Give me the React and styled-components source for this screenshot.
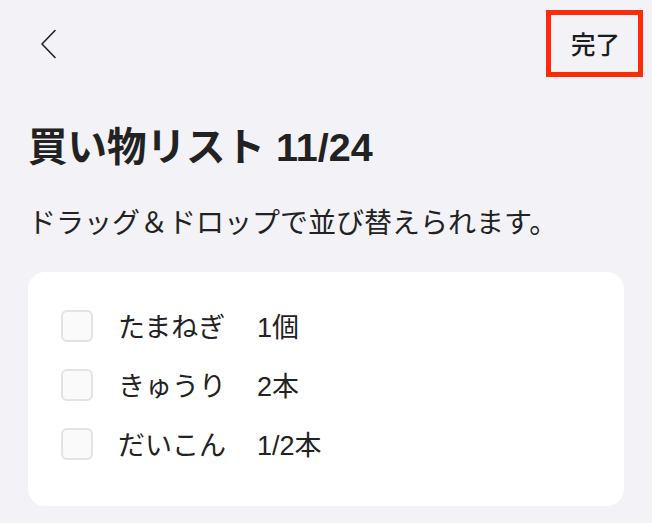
import React from 'react';
import styled, { createGlobalStyle } from 'styled-components';

const GlobalStyle = createGlobalStyle`
  html, body {
    margin: 0;
    padding: 0;
    background: #f2f2f7;
  }
  body {
    font-family: 'Liberation Sans', 'Noto Sans CJK JP', sans-serif;
    color: #222222;
  }
`;

const Page = styled.div`
  width: 652px;
  height: 523px;
  background: #f2f2f7;
  overflow: hidden;
`;

const Nav = styled.div`
  height: 87px;
  display: flex;
  align-items: center;
  justify-content: space-between;
  padding: 0 9px 0 40px;
  box-sizing: border-box;
`;

const BackButton = styled.button`
  border: none;
  background: none;
  padding: 0;
  width: 16px;
  height: 30px;
  display: flex;
  cursor: pointer;
`;

const DoneButton = styled.button`
  width: 97px;
  height: 67px;
  box-sizing: border-box;
  border: 5px solid #ff2a08;
  background: transparent;
  font-family: 'Noto Sans CJK JP', sans-serif;
  font-size: 24.5px;
  font-weight: 500;
  color: #1c1c1c;
  display: flex;
  align-items: center;
  justify-content: center;
  padding: 0 0 0 2px;
  cursor: pointer;
`;

const Content = styled.div`
  padding: 0 28px;
`;

const Title = styled.h1`
  margin: 36px 0 0;
  font-size: 39.5px;
  line-height: 48px;
  font-weight: 700;
  color: #222222;
`;

const Hint = styled.p`
  margin: 32px 0 0;
  font-family: 'Noto Sans CJK JP', sans-serif;
  font-size: 28px;
  line-height: 36px;
  color: #222222;
`;

const Card = styled.div`
  margin-top: 33px;
  height: 234px;
  box-sizing: border-box;
  background: #ffffff;
  border-radius: 17px;
  padding: 24px 0 0 33px;
`;

const Row = styled.label`
  height: 59px;
  display: flex;
  align-items: center;
`;

const Box = styled.span`
  width: 32px;
  height: 32px;
  box-sizing: border-box;
  border: 2px solid #e3e3e3;
  border-radius: 6px;
  background: #fafafa;
  margin-right: 25px;
  flex-shrink: 0;
`;

const Name = styled.span`
  width: 139px;
  font-family: 'Noto Sans CJK JP', sans-serif;
  font-size: 27px;
`;

const Qty = styled.span`
  font-size: 27px;
`;

const items = [
  { name: 'たまねぎ', qty: '1個' },
  { name: 'きゅうり', qty: '2本' },
  { name: 'だいこん', qty: '1/2本' },
];

export default function App() {
  return (
    <Page>
      <GlobalStyle />
      <Nav>
        <BackButton aria-label="戻る">
          <svg width="16" height="30" viewBox="0 0 16 30" fill="none">
            <path d="M15 1.5 L2 15 L15 28.5" stroke="#222" strokeWidth="1.6" strokeLinecap="round" strokeLinejoin="round" />
          </svg>
        </BackButton>
        <DoneButton>完了</DoneButton>
      </Nav>
      <Content>
        <Title>買い物リスト 11/24</Title>
        <Hint>ドラッグ＆ドロップで並び替えられます。</Hint>
        <Card>
          {items.map((item) => (
            <Row key={item.name}>
              <Box />
              <Name>{item.name}</Name>
              <Qty>{item.qty}</Qty>
            </Row>
          ))}
        </Card>
      </Content>
    </Page>
  );
}
